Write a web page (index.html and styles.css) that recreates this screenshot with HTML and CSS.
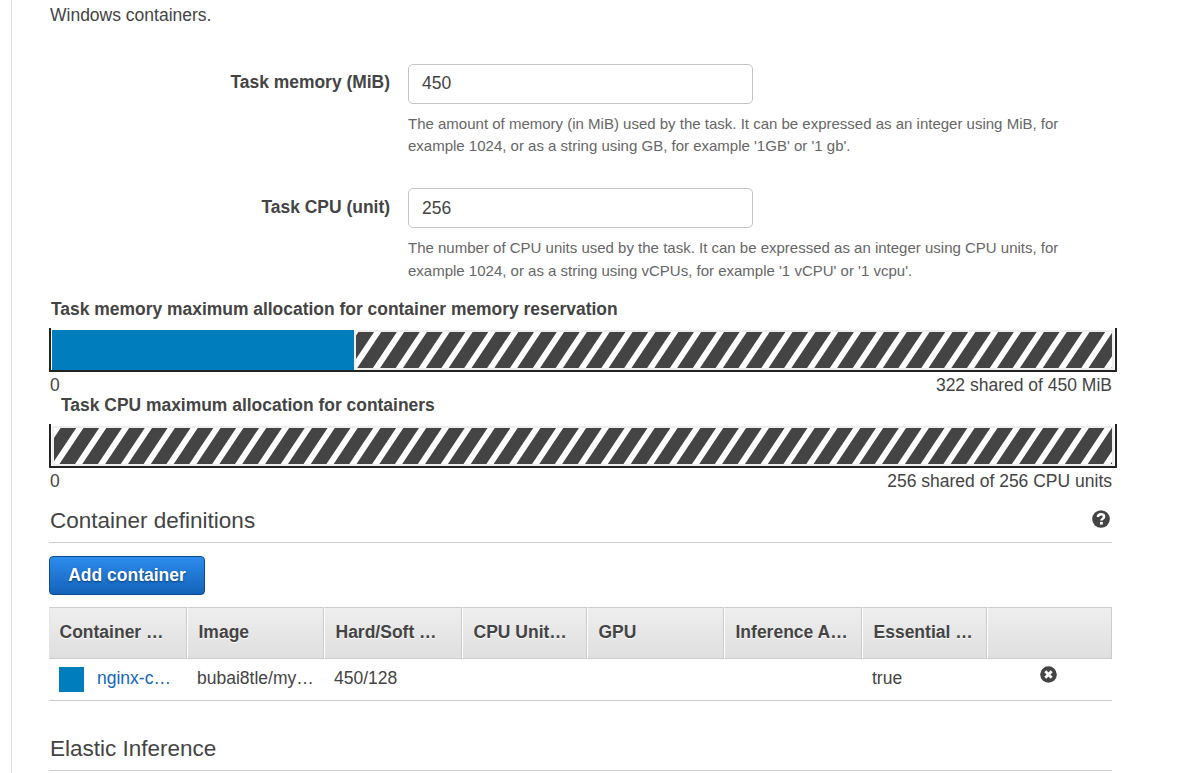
FILE: index.html
```html
<!DOCTYPE html>
<html lang="en">
<head>
<meta charset="utf-8">
<title>Task definition</title>
<link rel="stylesheet" href="styles.css">
</head>
<body>
<main class="panel">
  <p class="intro">Windows containers.</p>

  <div class="field">
    <label class="field-label" for="mem">Task memory (MiB)</label>
    <div class="field-body">
      <input class="field-input" id="mem" type="text" value="450">
      <p class="help">The amount of memory (in MiB) used by the task. It can be expressed as an integer using MiB, for<br>example 1024, or as a string using GB, for example '1GB' or '1 gb'.</p>
    </div>
  </div>
  <div class="field field-cpu">
    <label class="field-label" for="cpu">Task CPU (unit)</label>
    <div class="field-body">
      <input class="field-input" id="cpu" type="text" value="256">
      <p class="help">The number of CPU units used by the task. It can be expressed as an integer using CPU units, for<br>example 1024, or as a string using vCPUs, for example '1 vCPU' or '1 vcpu'.</p>
    </div>
  </div>

  <section class="alloc">
    <h4 class="alloc-title">Task memory maximum allocation for container memory reservation</h4>
    <div class="bar">
      <div class="bar-used"></div>
      <div class="bar-shared">
        <svg class="stripes" width="100%" height="36">
          <path class="stripe-lines" d="M-4.8 18H1200" transform="skewX(-33.7)"/>
        </svg>
      </div>
    </div>
    <div class="scale"><span>0</span><span>322 shared of 450 MiB</span></div>
  </section>

  <section class="alloc alloc-cpu">
    <h4 class="alloc-title">Task CPU maximum allocation for containers</h4>
    <div class="bar">
      <div class="bar-shared">
        <svg class="stripes" width="100%" height="36">
          <path class="stripe-lines" d="M-.6 18H1200" transform="skewX(-33.7)"/>
        </svg>
      </div>
    </div>
    <div class="scale"><span>0</span><span>256 shared of 256 CPU units</span></div>
  </section>

  <header class="heading">
    <h3 class="heading-text">Container definitions</h3>
    <svg class="help-icon" width="18" height="18" viewBox="0 0 18 18">
      <circle cx="9" cy="9" r="8.8" fill="#444"/>
      <path d="M5.900 7C6 5.100 7.300 4.300 9 4.300c1.900 0 3.100.9 3.100 2.400 0 2-2.700 1.900-2.700 3.900" fill="none" stroke="#fff" stroke-width="2.500"/>
      <path d="M8 11.900h2.800v2.700H8z" fill="#fff"/>
    </svg>
  </header>
  <button class="add" type="button">Add container</button>

  <table class="grid">
    <colgroup><col class="c-wide"><col class="c-mid"><col class="c-wide"><col class="c-narrow"><col class="c-mid"><col class="c-wide"><col class="c-narrow"><col class="c-narrow"></colgroup>
    <thead>
      <tr><th>Container …</th><th>Image</th><th>Hard/Soft …</th><th>CPU Unit…</th><th>GPU</th><th>Inference A…</th><th>Essential …</th><th></th></tr>
    </thead>
    <tbody>
      <tr>
        <td><div class="name"><span class="swatch"></span><span><a class="link">nginx-c…</a></span></div></td>
        <td>bubai8tle/my…</td><td>450/128</td><td></td><td></td><td></td><td>true</td>
        <td class="action"><svg class="remove-icon" width="17" height="17" viewBox="0 0 17 17">
          <circle cx="8.500" cy="8.500" r="8.300" fill="#444"/>
          <path d="M5.300 5.300l6.400 6.400M11.700 5.300l-6.400 6.400" stroke="#fff" stroke-width="2.800"/>
        </svg></td>
      </tr>
    </tbody>
  </table>

  <header class="heading heading-elastic"><h3 class="heading-text">Elastic Inference</h3></header>
</main>
</body>
</html>
```
FILE: styles.css
```css
* { box-sizing: border-box; }
body {
  margin: 0;
  height: 773px;
  overflow: hidden;
  background: #fff;
  color: #444;
  font: 17.5px/22px "Liberation Sans", Arial, sans-serif;
}
p, h3, h4 { margin: 0; }
.panel {
  width: 1101px;
  height: 773px;
  margin-left: 11px;
  padding: 4px 0 0 37px;
  border-left: 1px solid #ddd;
}
.intro { height: 60px; padding-left: 1px; }

.field { display: flex; height: 124px; }
.field-cpu { height: 110px; }
.field-label {
  width: 341px;
  margin-right: 18px;
  padding-top: 7px;
  text-align: right;
  font-size: 17.45px;
  font-weight: bold;
}
.field-cpu .field-label { padding-top: 8px; }
.field-body { flex: 1; }
.field-input {
  display: block;
  width: 345px;
  height: 40px;
  padding: 0 13px 2px;
  border: 1px solid #c4c4c4;
  border-radius: 5px;
  background: #fff;
  color: #444;
  font: inherit;
}
.field-cpu .field-input { padding-bottom: 0; }
.help {
  margin-top: 9px;
  color: #666;
  font-size: 15px;
  line-height: 22px;
  white-space: nowrap;
}
.field-cpu .help { line-height: 22.5px; }

.alloc { height: 96px; }
.alloc-title { padding-left: 2px; font-size: 17.45px; line-height: 22px; }
.alloc-cpu .alloc-title { padding-left: 12px; }
.bar {
  display: flex;
  width: 1068px;
  height: 44px;
  margin-top: 8px;
  padding: 2px 1px 0;
  border: 2px solid #222;
  border-top: 0;
}
.bar-used { width: 302px; height: 40px; background: #007dbc; }
.bar-shared { flex: 1; height: 40px; border: 2px solid #eee; }
.stripes { display: block; background: #444; }
.stripe-lines {
  fill: none;
  stroke: #fff;
  stroke-width: 36px;
  stroke-dasharray: 7.2 15.65;
}
.scale {
  display: flex;
  justify-content: space-between;
  padding: 2px 0 0 1px;
}

.heading {
  display: flex;
  justify-content: space-between;
  height: 53px;
  padding-left: 1px;
  border-bottom: 1px solid #ccc;
}
.heading-text { padding-top: 17px; font-size: 22.5px; font-weight: normal; line-height: 28px; }
.help-icon { margin: 20px 2px 0 0; }
.add {
  display: block;
  width: 156px;
  height: 39px;
  margin: 13px 0 12px;
  padding: 0 0 2px;
  border: 1px solid #0b4a91;
  border-radius: 4px;
  background: linear-gradient(#2d8cec, #1463b9);
  color: #fff;
  font: bold 17.5px/22px "Liberation Sans", Arial, sans-serif;
  text-shadow: 0 1px 2px #063d75;
}

.grid { width: 1063px; border-collapse: separate; border-spacing: 0; table-layout: fixed; }
.c-wide { width: 138px; }
.c-mid { width: 137px; }
.c-narrow { width: 125px; }
.grid th {
  height: 52px;
  padding: 0 0 2px 10.5px;
  border: 1px solid #ccc;
  border-left: 1px solid #fff;
  background: linear-gradient(#eee, #dfdfdf);
  text-align: left;
  text-shadow: 0 1px 0 #fff;
  white-space: nowrap;
}
.grid th:first-child { padding-left: 9.5px; border-left-color: #e4e4e4; }
.grid td {
  height: 42px;
  padding: 0 0 4px 10px;
  border-bottom: 1px solid #ccc;
  white-space: nowrap;
}
.name { display: flex; gap: 13px; height: 22px; }
.swatch { width: 25px; height: 25px; background: #007dbc; }
.link { color: #1166bb; }
.grid .action { padding: 0 3px 10px 0; text-align: center; }
.remove-icon { display: block; margin: 0 auto; }
.heading-elastic { height: 70px; }
.heading-elastic .heading-text { padding-top: 34px; }
```
